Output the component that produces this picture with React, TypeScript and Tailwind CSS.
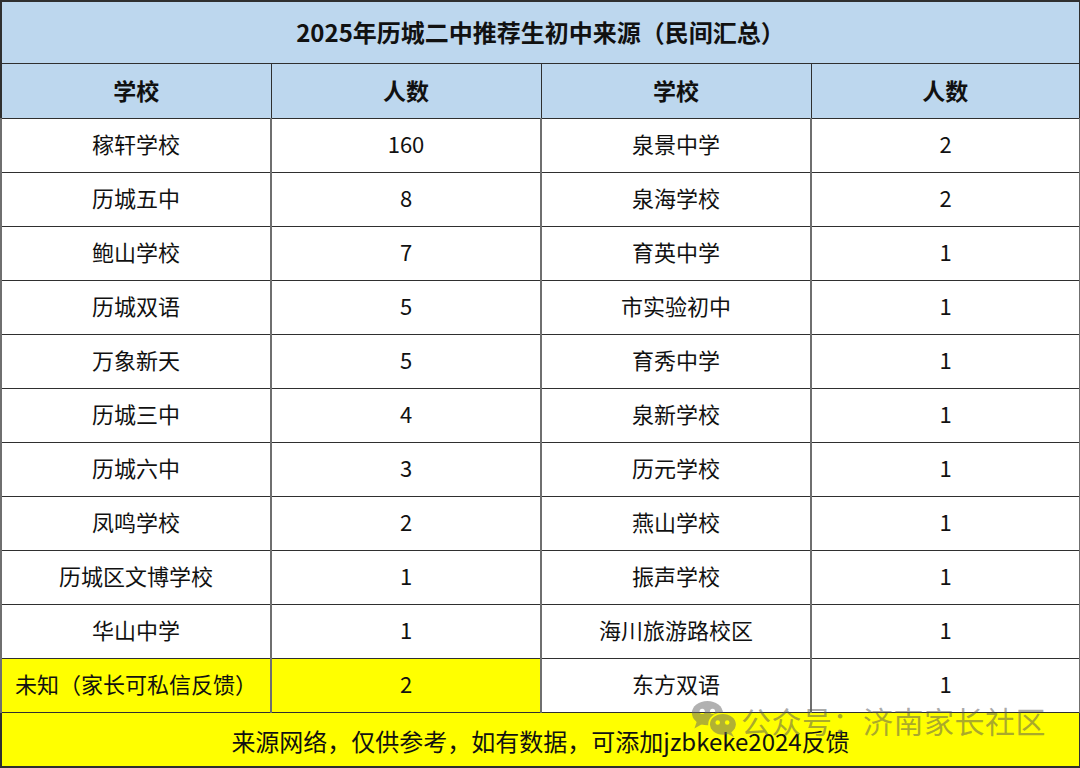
const LEFT = [
  ["稼轩学校", "160"],
  ["历城五中", "8"],
  ["鲍山学校", "7"],
  ["历城双语", "5"],
  ["万象新天", "5"],
  ["历城三中", "4"],
  ["历城六中", "3"],
  ["凤鸣学校", "2"],
  ["历城区文博学校", "1"],
  ["华山中学", "1"],
  ["未知（家长可私信反馈）", "2"],
];

const RIGHT = [
  ["泉景中学", "2"],
  ["泉海学校", "2"],
  ["育英中学", "1"],
  ["市实验初中", "1"],
  ["育秀中学", "1"],
  ["泉新学校", "1"],
  ["历元学校", "1"],
  ["燕山学校", "1"],
  ["振声学校", "1"],
  ["海川旅游路校区", "1"],
  ["东方双语", "1"],
];

function WeChatMark() {
  return (
    <svg width="50" height="44" viewBox="0 0 58 46" className="block">
      <defs>
        <mask id="wm">
          <rect width="58" height="46" fill="white" />
          <circle cx="13" cy="13" r="3" fill="black" />
          <circle cx="25" cy="13" r="3" fill="black" />
          <ellipse cx="37" cy="28" rx="17" ry="14" fill="black" />
        </mask>
        <mask id="wm2">
          <rect width="58" height="46" fill="white" />
          <circle cx="31" cy="26" r="2.6" fill="black" />
          <circle cx="42" cy="26" r="2.6" fill="black" />
        </mask>
      </defs>
      <g opacity="0.5" fill="#666">
        <g mask="url(#wm)">
          <ellipse cx="19" cy="15" rx="18" ry="14" />
          <path d="M7 24 L4 33 L14 27 Z" />
        </g>
        <g mask="url(#wm2)">
          <ellipse cx="37" cy="28" rx="15" ry="12" />
          <path d="M46 36 L50 43 L41 38 Z" />
        </g>
      </g>
    </svg>
  );
}

export default function App() {
  const cell = "border-x-2 border-x-[#6f6f6f] border-y border-y-[#2f2f2f] text-center align-middle pb-[3px]";
  return (
    <div className="relative w-[1080px] h-[768px] bg-white" style={{ fontFamily: '"Noto Sans CJK SC", "Noto Sans", sans-serif' }}>
      <table className="w-[1079px] table-fixed border-collapse border-2 border-[#2f2f2f] text-[#111]">
        <colgroup>
          <col className="w-[270px]" />
          <col className="w-[270px]" />
          <col className="w-[270px]" />
          <col className="w-[269px]" />
        </colgroup>
        <tbody>
          <tr className="h-[62px] bg-[#bdd7ee]">
            <td colSpan={4} className="border border-[#2f2f2f] text-center text-[24px] font-bold">
              2025年历城二中推荐生初中来源（民间汇总）
            </td>
          </tr>
          <tr className="h-[55px] bg-[#bdd7ee] text-[23px] font-bold">
            <td className="border border-[#2f2f2f] text-center">学校</td>
            <td className="border border-[#2f2f2f] text-center">人数</td>
            <td className="border border-[#2f2f2f] text-center">学校</td>
            <td className="border border-[#2f2f2f] text-center">人数</td>
          </tr>
          {LEFT.map((l, i) => {
            const r = RIGHT[i];
            const yellow = i === LEFT.length - 1;
            return (
              <tr key={i} className="h-[54px] text-[22px]">
                <td className={`${cell} ${yellow ? "bg-[#ffff00] whitespace-nowrap" : ""}`}>{l[0]}</td>
                <td className={`${cell} ${yellow ? "bg-[#ffff00]" : ""}`}>{l[1]}</td>
                <td className={cell}>{r[0]}</td>
                <td className={cell}>{r[1]}</td>
              </tr>
            );
          })}
          <tr className="h-[55px] bg-[#ffff00]">
            <td colSpan={4} className="border border-[#2f2f2f] text-center align-middle pt-[3px] text-[24px]">
              来源网络，仅供参考，如有数据，可添加jzbkeke2024反馈
            </td>
          </tr>
        </tbody>
      </table>

      <div className="absolute left-[691px] top-[698px] flex items-center gap-0 pointer-events-none">
        <WeChatMark />
        <span className="text-[30px] leading-none text-[#555]/50 tracking-[0.5px]">公众号：济南家长社区</span>
      </div>
    </div>
  );
}
